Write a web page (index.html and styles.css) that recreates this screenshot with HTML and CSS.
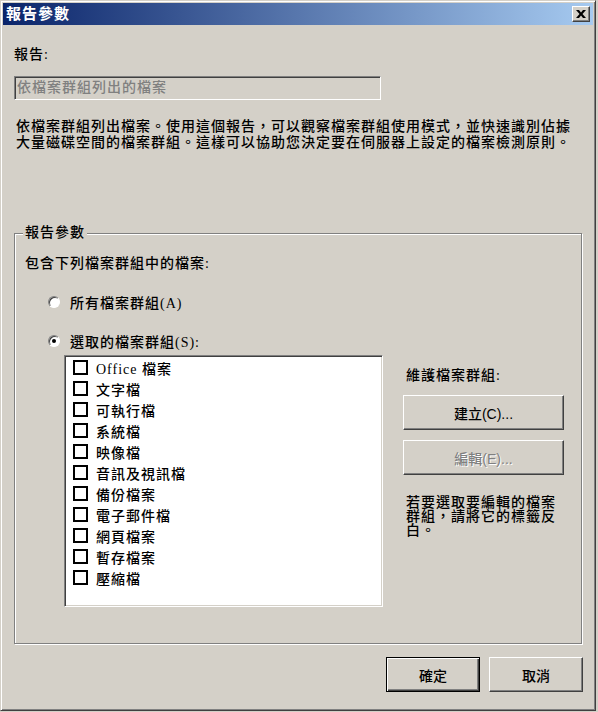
FILE: index.html
```html
<!DOCTYPE html>
<html lang="zh-Hant">
<head>
    <meta charset="UTF-8">
    <title>報告參數</title>
    <link rel="stylesheet" href="styles.css">
</head>
<body>

    <div class="window">
        <div class="titlebar">
            <span class="title">報告參數</span>
            <button class="close-btn">
                <svg width="10" height="8" viewBox="0 0 10 8"><path d="M0 0h3l2 2.4L7 0h3L6.5 4 10 8H7L5 5.6 3 8H0l3.5-4z" fill="#000"/></svg>
            </button>
        </div>

        <div class="content">
            <div class="label">報告:</div>
            <div class="textbox">依檔案群組列出的檔案</div>

            <p class="desc">依檔案群組列出檔案。使用這個報告，可以觀察檔案群組使用模式，並快速識別佔據大量磁碟空間的檔案群組。這樣可以協助您決定要在伺服器上設定的檔案檢測原則。</p>

            <!-- 群組方塊 -->
            <div class="group">
                <span class="legend">報告參數</span>
                <div class="label">包含下列檔案群組中的檔案:</div>

                <div class="radio-row first">
                    <span class="radio"></span>
                    <span>所有檔案群組(A)</span>
                </div>
                <div class="radio-row second">
                    <span class="radio checked"></span>
                    <span>選取的檔案群組(S):</span>
                </div>

                <div class="groups-row">
                    <div class="listbox">
                        <div class="item"><span class="check"></span>Office 檔案</div>
                        <div class="item"><span class="check"></span>文字檔</div>
                        <div class="item"><span class="check"></span>可執行檔</div>
                        <div class="item"><span class="check"></span>系統檔</div>
                        <div class="item"><span class="check"></span>映像檔</div>
                        <div class="item"><span class="check"></span>音訊及視訊檔</div>
                        <div class="item"><span class="check"></span>備份檔案</div>
                        <div class="item"><span class="check"></span>電子郵件檔</div>
                        <div class="item"><span class="check"></span>網頁檔案</div>
                        <div class="item"><span class="check"></span>暫存檔案</div>
                        <div class="item"><span class="check"></span>壓縮檔</div>
                    </div>

                    <div class="side">
                        <div class="side-label">維護檔案群組:</div>
                        <button class="btn wide">建立(C)...</button>
                        <button class="btn wide disabled">編輯(E)...</button>
                        <p class="hint">若要選取要編輯的檔案群組，請將它的標籤反白。</p>
                    </div>
                </div>
            </div>

            <div class="footer">
                <button class="btn default">確定</button>
                <button class="btn">取消</button>
            </div>
        </div>
    </div>

</body>
</html>
```

FILE: styles.css
```css
body {
    margin: 0;
    background: #d4d0c8;
    font-family: "Liberation Serif", "Noto Sans CJK TC", serif;
    font-size: 14px;
    font-weight: 500;
    letter-spacing: 1px;
    color: #000;
}

.window {
    width: 596px;
    height: 711px;
    box-sizing: border-box;
    padding: 2px;
    background: #d4d0c8;
    border: 1px solid;
    border-color: #d4d0c8 #404040 #404040 #d4d0c8;
    box-shadow: inset 1px 1px 0 #fff, inset -1px -1px 0 #808080;
}

.titlebar {
    height: 22px;
    display: flex;
    align-items: center;
    justify-content: space-between;
    background: linear-gradient(to right, #0a246a, #a6caf0);
}

.title {
    color: #fff;
    font-weight: bold;
    font-size: 15px;
    padding-left: 3px;
    line-height: 16px;
}

.close-btn {
    width: 18px;
    height: 16px;
    margin-right: 3px;
    padding: 0;
    display: flex;
    align-items: center;
    justify-content: center;
    background: #d4d0c8;
    border: 1px solid;
    border-color: #fff #404040 #404040 #fff;
    box-shadow: inset -1px -1px 0 #808080;
}

.content {
    padding: 0 11px;
}

.label {
    line-height: 16px;
}

.content > .label {
    margin-top: 22px;
}

.textbox {
    width: 367px;
    height: 24px;
    box-sizing: border-box;
    margin-top: 13px;
    padding: 2px 0 0 2px;
    line-height: 17px;
    color: #808080;
    border: 1px solid;
    border-color: #808080 #fff #fff #808080;
    box-shadow: inset 1px 1px 0 #404040;
}

.desc {
    margin: 19px 0 0 2px;
    line-height: 16px;
}

.group {
    position: relative;
    margin-top: 82px;
    padding: 22px 0 36px 10px;
    border: 1px solid #808080;
    box-shadow: 1px 1px 0 #fff, inset 1px 1px 0 #fff;
}

.legend {
    position: absolute;
    left: 8px;
    top: -9px;
    padding: 0 2px;
    line-height: 16px;
    background: #d4d0c8;
}

.radio-row {
    display: flex;
    align-items: center;
    height: 16px;
    padding-left: 23px;
    gap: 10px;
}

.radio-row.first {
    margin-top: 22px;
}

.radio-row.second {
    margin-top: 23px;
}

.radio {
    width: 12px;
    height: 12px;
    box-sizing: border-box;
    border-radius: 50%;
    background: #fff;
    border: 1px solid;
    border-color: #808080 #fff #fff #808080;
    box-shadow: inset 1px 1px 0 #404040;
    display: flex;
    align-items: center;
    justify-content: center;
}

.radio.checked::after {
    content: "";
    width: 4px;
    height: 4px;
    border-radius: 50%;
    background: #000;
}

.groups-row {
    display: flex;
    gap: 20px;
    margin: 6px 0 0 39px;
}

.listbox {
    width: 319px;
    height: 252px;
    box-sizing: border-box;
    padding: 1px 0 0 8px;
    background: #fff;
    border: 1px solid;
    border-color: #808080 #fff #fff #808080;
    box-shadow: inset 1px 1px 0 #404040, inset -1px -1px 0 #d4d0c8;
}

.item {
    height: 21px;
    display: flex;
    align-items: center;
    gap: 8px;
}

.check {
    width: 15px;
    height: 15px;
    box-sizing: border-box;
    border: 2px solid #000;
    background: #fff;
}

.side {
    width: 161px;
    padding-top: 13px;
}

.side-label {
    padding-left: 3px;
    line-height: 16px;
    margin-bottom: 11px;
}

.btn {
    font-family: "Liberation Sans", "Noto Sans CJK TC", sans-serif;
    font-size: 14px;
    font-weight: 500;
    letter-spacing: 0;
    background: #d4d0c8;
    color: #000;
    padding: 0;
    border: 1px solid;
    border-color: #fff #404040 #404040 #fff;
    box-shadow: inset -1px -1px 0 #808080;
}

.btn.wide {
    display: block;
    width: 161px;
    height: 35px;
    margin-bottom: 10px;
}

.btn.disabled {
    color: #808080;
    text-shadow: 1px 1px 0 #fff;
}

.hint {
    margin: 21px 0 0 3px;
    line-height: 14px;
}

.footer {
    display: flex;
    justify-content: flex-end;
    gap: 9px;
    margin: 13px -1px 0 0;
}

.footer .btn {
    width: 94px;
    height: 35px;
}

.footer .btn.default {
    border: 1px solid #000;
    box-shadow: inset 1px 1px 0 #fff, inset -1px -1px 0 #404040, inset -2px -2px 0 #808080;
}
```
